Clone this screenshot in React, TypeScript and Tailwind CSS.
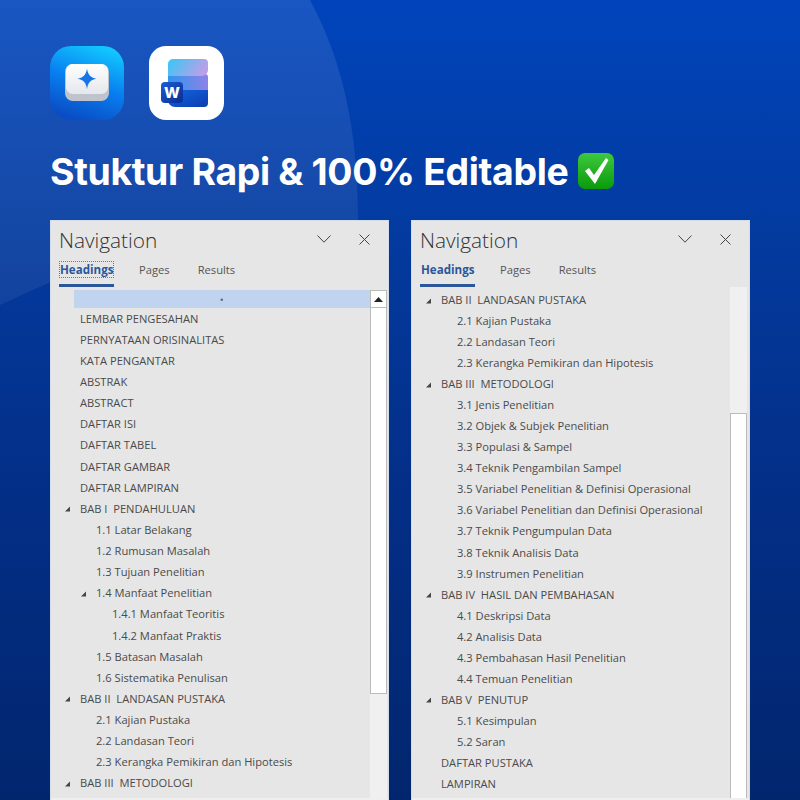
import React from "react";

type Row = { t: string; l: number; a?: boolean };

const leftRows: Row[] = [
  { t: "LEMBAR PENGESAHAN", l: 0 }, { t: "PERNYATAAN ORISINALITAS", l: 0 }, { t: "KATA PENGANTAR", l: 0 },
  { t: "ABSTRAK", l: 0 }, { t: "ABSTRACT", l: 0 }, { t: "DAFTAR ISI", l: 0 }, { t: "DAFTAR TABEL", l: 0 },
  { t: "DAFTAR GAMBAR", l: 0 }, { t: "DAFTAR LAMPIRAN", l: 0 }, { t: "BAB I  PENDAHULUAN", l: 0, a: true },
  { t: "1.1 Latar Belakang", l: 1 }, { t: "1.2 Rumusan Masalah", l: 1 }, { t: "1.3 Tujuan Penelitian", l: 1 },
  { t: "1.4 Manfaat Penelitian", l: 1, a: true }, { t: "1.4.1 Manfaat Teoritis", l: 2 }, { t: "1.4.2 Manfaat Praktis", l: 2 },
  { t: "1.5 Batasan Masalah", l: 1 }, { t: "1.6 Sistematika Penulisan", l: 1 }, { t: "BAB II  LANDASAN PUSTAKA", l: 0, a: true },
  { t: "2.1 Kajian Pustaka", l: 1 }, { t: "2.2 Landasan Teori", l: 1 }, { t: "2.3 Kerangka Pemikiran dan Hipotesis", l: 1 },
  { t: "BAB III  METODOLOGI", l: 0, a: true },
];

const rightRows: Row[] = [
  { t: "BAB II  LANDASAN PUSTAKA", l: 0, a: true }, { t: "2.1 Kajian Pustaka", l: 1 }, { t: "2.2 Landasan Teori", l: 1 },
  { t: "2.3 Kerangka Pemikiran dan Hipotesis", l: 1 }, { t: "BAB III  METODOLOGI", l: 0, a: true }, { t: "3.1 Jenis Penelitian", l: 1 },
  { t: "3.2 Objek & Subjek Penelitian", l: 1 }, { t: "3.3 Populasi & Sampel", l: 1 }, { t: "3.4 Teknik Pengambilan Sampel", l: 1 },
  { t: "3.5 Variabel Penelitian & Definisi Operasional", l: 1 }, { t: "3.6 Variabel Penelitian dan Definisi Operasional", l: 1 },
  { t: "3.7 Teknik Pengumpulan Data", l: 1 }, { t: "3.8 Teknik Analisis Data", l: 1 }, { t: "3.9 Instrumen Penelitian", l: 1 },
  { t: "BAB IV  HASIL DAN PEMBAHASAN", l: 0, a: true }, { t: "4.1 Deskripsi Data", l: 1 }, { t: "4.2 Analisis Data", l: 1 },
  { t: "4.3 Pembahasan Hasil Penelitian", l: 1 }, { t: "4.4 Temuan Penelitian", l: 1 }, { t: "BAB V  PENUTUP", l: 0, a: true },
  { t: "5.1 Kesimpulan", l: 1 }, { t: "5.2 Saran", l: 1 }, { t: "DAFTAR PUSTAKA", l: 0 }, { t: "LAMPIRAN", l: 0 },
];

function TreeRow({ r, tall }: { r: Row; tall?: boolean }) {
  return (
    <div className={(tall ? "h-[21.14px]" : "h-[21.04px]") + " flex items-center whitespace-pre text-[11.15px] text-[#4a4a4a]"}>
      <div className={r.l === 0 ? "w-[29px] shrink-0" : r.l === 1 ? "w-[45px] shrink-0" : "w-[61px] shrink-0"}>
        {r.a && (
          <svg width="29" height="10" viewBox="0 0 29 10" className={r.l === 0 ? "" : "ml-[16px]"}>
            <path d="M14 7.500h5V2.500z" fill="#444444" />
          </svg>
        )}
      </div>
      <span>{r.t}</span>
    </div>
  );
}

function Header({ focus }: { focus?: boolean }) {
  return (
    <div className="flex shrink-0 flex-col">
      <div className="flex h-[36px] items-center justify-between pl-[8px] pr-[18px]">
        <span className="pt-[1px] text-[20.8px] font-light leading-[28px] text-[#333333]">Navigation</span>
        <div className="flex items-center gap-[28px]">
          <svg width="14" height="8" viewBox="0 0 14 8" fill="none" stroke="#444" strokeWidth="1"><path d="M.5.500L7 7.200 13.500.500" /></svg>
          <svg width="11" height="11" viewBox="0 0 11 11" fill="none" stroke="#444" strokeWidth="1"><path d="M.5.500l10 10M10.500.500l-10 10" /></svg>
        </div>
      </div>
      <div className="flex items-start pl-[8px] pt-[4px] text-[11.2px] text-[#555555]">
        <div className="flex w-[55px] flex-col">
          <span className={focus ? "h-[17px] border border-dotted border-[#777777] text-center text-[11.6px] font-bold leading-[15px] text-[#2b579a]" : "h-[17px] border border-transparent text-center text-[11.6px] font-bold leading-[15px] text-[#2b579a]"}>Headings</span>
          <div className="mt-[6px] h-[3px] bg-[#2b579a]" />
        </div>
        <span className="ml-[25px] leading-[17px]">Pages</span>
        <span className="ml-[28px] leading-[17px]">Results</span>
      </div>
    </div>
  );
}

function Panel({ children }: { children: React.ReactNode }) {
  return (
    <div className="flex h-[580px] w-[339px] flex-col overflow-hidden border-x border-t border-[#d5dcea] bg-[#e6e6e6]" style={{ fontFamily: '"Open Sans", sans-serif' }}>
      {children}
      <div className="h-[2px] shrink-0 bg-[#efefef]" />
    </div>
  );
}

function KeyIcon() {
  return (
    <svg width="74" height="74" viewBox="0 0 74 74">
      <defs>
        <linearGradient id="kb" x1="0.7" y1="0" x2="0.35" y2="1">
          <stop offset="0" stopColor="#12c8ff" />
          <stop offset="0.5" stopColor="#0880f0" />
          <stop offset="1" stopColor="#0a4cc4" />
        </linearGradient>
        <linearGradient id="cap" x1="0" y1="0" x2="0" y2="1">
          <stop offset="0" stopColor="#ffffff" />
          <stop offset="1" stopColor="#e4e7ec" />
        </linearGradient>
      </defs>
      <rect width="74" height="74" rx="21" fill="url(#kb)" />
      <rect x="15" y="18" width="44" height="37" rx="8" fill="#bfc4cc" />
      <rect x="16" y="18" width="42" height="30" rx="6.500" fill="url(#cap)" />
      <path d="M37 22.500c1 6.300 3.200 8.700 9.500 10.300-6.300 1.200-8.500 3.800-9.500 10.400-1-6.600-3.200-9.200-9.500-10.400 6.300-1.600 8.500-4 9.500-10.300z" fill="#1676e8" />
    </svg>
  );
}

function WordLogo() {
  return (
    <svg width="75" height="74" viewBox="0 0 75 74">
      <defs>
        <linearGradient id="w1" x1="0" y1="0" x2="1" y2="0.300">
          <stop offset="0" stopColor="#35c8f6" />
          <stop offset="1" stopColor="#b9a0e8" />
        </linearGradient>
        <linearGradient id="w2" x1="0" y1="0" x2="1" y2="0">
          <stop offset="0" stopColor="#2f95ee" />
          <stop offset="1" stopColor="#8f82e8" />
        </linearGradient>
        <linearGradient id="w3" x1="0" y1="0" x2="1" y2="1">
          <stop offset="0" stopColor="#1266e0" />
          <stop offset="1" stopColor="#0c3cb0" />
        </linearGradient>
        <linearGradient id="w4" x1="0" y1="0" x2="1" y2="1">
          <stop offset="0" stopColor="#1c5dd4" />
          <stop offset="1" stopColor="#0a2c92" />
        </linearGradient>
      </defs>
      <rect width="75" height="74" rx="17" fill="#ffffff" />
      <path d="M19 44V28h37a3 3 0 0 1 3 3v13z" fill="url(#w2)" />
      <path d="M19 18a5 5 0 0 1 5-5h31a4 4 0 0 1 4 4v7a6 6 0 0 1-6 6H19z" fill="url(#w1)" />
      <path d="M26 44h33v13a4 4 0 0 1-4 4H26a7 7 0 0 1-7-7v-3a7 7 0 0 1 7-7z" fill="url(#w3)" />
      <rect x="12" y="36" width="22" height="21" rx="4" fill="url(#w4)" />
      <text x="23" y="52" textAnchor="middle" fontFamily="Inter, sans-serif" fontWeight="800" fontSize="15" fill="#ffffff">W</text>
    </svg>
  );
}

export default function App() {
  return (
    <div className="relative h-[800px] w-[800px] overflow-hidden bg-[linear-gradient(180deg,#0044bc_0%,#033a9e_30%,#032f88_60%,#02266e_100%)]">
      <svg className="absolute left-0 top-0" width="400" height="320" viewBox="0 0 400 320">
        <defs>
          <linearGradient id="sheen" x1="0" y1="0" x2="0" y2="1">
            <stop offset="0" stopColor="#ffffff" stopOpacity="0.1" />
            <stop offset="1" stopColor="#ffffff" stopOpacity="0.06" />
          </linearGradient>
        </defs>
        <path d="M0 0H310C343 62 358 130 358 220L48 283 0 305Z" fill="url(#sheen)" />
      </svg>
      <div className="relative flex flex-col pl-[50px] pt-[46px]">
        <div className="flex gap-[25px]">
          <KeyIcon />
          <WordLogo />
        </div>
        <div className="mt-[27px] flex h-[50px] items-center gap-[9px]">
          <span className="text-[37.4px] font-bold leading-[50px] tracking-[-0.35px] text-white" style={{ fontFamily: "Inter, sans-serif" }}>Stuktur Rapi &amp; 100% Editable</span>
          <svg width="38" height="38" viewBox="0 0 38 38" className="mb-[3px]">
            <defs>
              <linearGradient id="ck" x1="0" y1="0" x2="0" y2="1">
                <stop offset="0" stopColor="#3dc93d" />
                <stop offset="1" stopColor="#0a9a0a" />
              </linearGradient>
            </defs>
            <rect x="1" y="1" width="36" height="36" rx="7" fill="url(#ck)" />
            <path d="M8 19l4-3 5 7L29 6l2.500 2L18 32z" fill="#ffffff" />
          </svg>
        </div>
        <div className="mt-[23px] flex gap-[22px]">
          <Panel>
            <Header focus />
            <div className="flex min-h-0 flex-1 pr-[1px] pt-[3px]">
              <div className="min-w-0 flex-1">
                <div className="ml-[23px] flex h-[18px] items-center justify-center bg-[#c0d4ef]">
                  <span className="text-[8px] leading-none text-[#555555]">▪</span>
                </div>
                <div className="pt-[0.5px]">
                  {leftRows.map((r, i) => <TreeRow key={i} r={r} tall />)}
                </div>
              </div>
              <div className="flex w-[17px] shrink-0 flex-col">
                <div className="flex h-[18px] items-center justify-center border border-[#bbbbbb] bg-white">
                  <svg width="9" height="5" viewBox="0 0 9 5"><path d="M4.500 0L9 5H0z" fill="#222" /></svg>
                </div>
                <div className="h-[386px] border-x border-b border-[#bbbbbb] bg-white" />
                <div className="flex-1 bg-[#f0f0f0]" />
              </div>
            </div>
          </Panel>
          <Panel>
            <Header />
            <div className="flex min-h-0 flex-1 pr-[2px]">
              <div className="min-w-0 flex-1 pt-[3px]">
                {rightRows.map((r, i) => <TreeRow key={i} r={r} />)}
              </div>
              <div className="flex w-[17px] shrink-0 flex-col">
                <div className="h-[126px] bg-[#f0f0f0]" />
                <div className="flex-1 border-x border-t border-[#bbbbbb] bg-white" />
              </div>
            </div>
          </Panel>
        </div>
      </div>
    </div>
  );
}
